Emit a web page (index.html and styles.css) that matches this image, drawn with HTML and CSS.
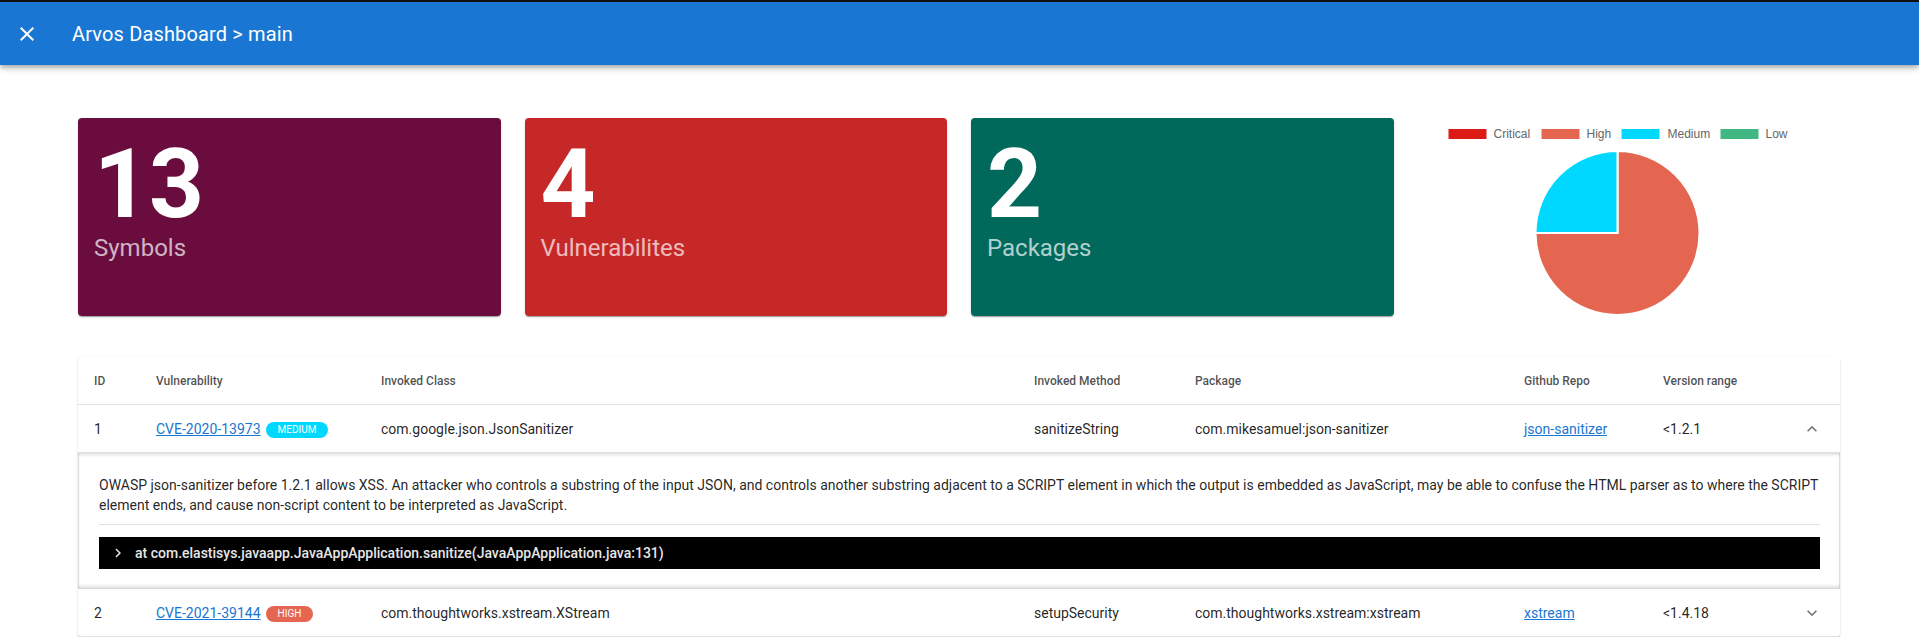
FILE: index.html
```html
<!DOCTYPE html>
<html lang="en">
<head>
<meta charset="utf-8">
<title>Arvos Dashboard</title>
<link rel="stylesheet" href="styles.css">
</head>
<body>
<header class="appbar">
  <span class="appbar-icon">
    <svg viewBox="0 0 24 24" width="24" height="24"><path d="M19 6.41 17.59 5 12 10.59 6.41 5 5 6.41 10.59 12 5 17.59 6.41 19 12 13.41 17.59 19 19 17.59 13.41 12z" fill="#fff"/></svg>
  </span>
  <h1 class="appbar-title">Arvos Dashboard &gt; main</h1>
</header>
<main class="content">
  <section class="stats">
    <div class="stat stat-symbols">
      <div class="stat-value">13</div>
      <div class="stat-label">Symbols</div>
    </div>
    <div class="stat stat-vulns">
      <div class="stat-value">4</div>
      <div class="stat-label">Vulnerabilites</div>
    </div>
    <div class="stat stat-packages">
      <div class="stat-value">2</div>
      <div class="stat-label">Packages</div>
    </div>
    <div class="chart">
      <svg class="chart-svg" viewBox="0 0 422 198" width="422" height="198">
        <rect x="30.5" y="11" width="38" height="10" fill="#DD1B16"/>
        <text x="75.5" y="19.5" class="legend-text">Critical</text>
        <rect x="123.5" y="11" width="38" height="10" fill="#E46651"/>
        <text x="168.5" y="19.5" class="legend-text">High</text>
        <rect x="203.5" y="11" width="38" height="10" fill="#00D8FF"/>
        <text x="249.5" y="19.5" class="legend-text">Medium</text>
        <rect x="302.5" y="11" width="38" height="10" fill="#41B883"/>
        <text x="347.5" y="19.5" class="legend-text">Low</text>
        <path d="M199.5 115 L199.5 33 A82 82 0 1 1 117.5 115 Z" fill="#E46651" stroke="#fff" stroke-width="2"/>
        <path d="M199.5 115 L117.5 115 A82 82 0 0 1 199.5 33 Z" fill="#00D8FF" stroke="#fff" stroke-width="2"/>
      </svg>
    </div>
  </section>

  <section class="table-card">
    <table class="vuln-table">
      <colgroup>
        <col class="c-id"><col class="c-vuln"><col class="c-class"><col class="c-method"><col class="c-pkg"><col class="c-repo"><col class="c-ver"><col class="c-toggle">
      </colgroup>
      <thead>
        <tr>
          <th>ID</th><th>Vulnerability</th><th>Invoked Class</th><th>Invoked Method</th><th>Package</th><th>Github Repo</th><th>Version range</th><th></th>
        </tr>
      </thead>
      <tbody>
        <tr class="row open">
          <td>1</td>
          <td><a class="link" href="#">CVE-2020-13973</a><span class="chip chip-medium">MEDIUM</span></td>
          <td>com.google.json.JsonSanitizer</td>
          <td>sanitizeString</td>
          <td>com.mikesamuel:json-sanitizer</td>
          <td><a class="link" href="#">json-sanitizer</a></td>
          <td>&lt;1.2.1</td>
          <td class="toggle"><svg viewBox="0 0 24 24" width="20" height="20"><path d="M12 8l-6 6 1.41 1.41L12 10.83l4.59 4.58L18 14z"/></svg></td>
        </tr>
        <tr class="detail-row">
          <td colspan="8" class="detail-cell">
            <div class="detail">
              <p class="detail-text">OWASP json-sanitizer before 1.2.1 allows XSS. An attacker who controls a substring of the input JSON, and controls another substring adjacent to a SCRIPT element in which the output is embedded as JavaScript, may be able to confuse the HTML parser as to where the SCRIPT element ends, and cause non-script content to be interpreted as JavaScript.</p>
              <hr class="divider">
              <div class="trace">
                <svg class="trace-icon" viewBox="0 0 24 24" width="18" height="18"><path d="M10 6 8.59 7.41 13.17 12l-4.58 4.59L10 18l6-6z"/></svg>
                <span class="trace-text">at com.elastisys.javaapp.JavaAppApplication.sanitize(JavaAppApplication.java:131)</span>
              </div>
            </div>
          </td>
        </tr>
        <tr class="row">
          <td>2</td>
          <td><a class="link" href="#">CVE-2021-39144</a><span class="chip chip-high">HIGH</span></td>
          <td>com.thoughtworks.xstream.XStream</td>
          <td>setupSecurity</td>
          <td>com.thoughtworks.xstream:xstream</td>
          <td><a class="link" href="#">xstream</a></td>
          <td>&lt;1.4.18</td>
          <td class="toggle"><svg viewBox="0 0 24 24" width="20" height="20"><path d="M16.59 8.59 12 13.17 7.41 8.59 6 10l6 6 6-6z"/></svg></td>
        </tr>
      </tbody>
    </table>
  </section>
</main>
</body>
</html>
```

FILE: styles.css
```css
html, body {
  margin: 0;
  padding: 0;
  overflow: hidden;
  background: #fff;
  font-family: Roboto, "Noto Sans", Arial, sans-serif;
  color: rgba(0, 0, 0, 0.87);
}

.appbar {
  display: flex;
  align-items: center;
  height: 63px;
  border-top: 2px solid #111;
  background: #1976d2;
  color: #fff;
  padding-left: 15px;
  box-shadow: 0 2px 4px -1px rgba(0,0,0,.2), 0 4px 5px 0 rgba(0,0,0,.14), 0 1px 10px 0 rgba(0,0,0,.12);
  position: relative;
  z-index: 2;
}

.appbar-icon {
  display: flex;
  width: 24px;
  height: 24px;
}

.appbar-title {
  margin: 0 0 0 33px;
  font-size: 20px;
  font-weight: 400;
  line-height: 1.6;
  letter-spacing: 0.15px;
}

.content {
  padding: 53px 79px 0 78px;
}

.stats {
  display: grid;
  grid-template-columns: repeat(4, 1fr);
  gap: 24px;
  height: 198px;
}

.stat {
  border-radius: 4px;
  color: #fff;
  padding: 22px 16px 0 16px;
  box-shadow: 0 2px 1px -1px rgba(0,0,0,.2), 0 1px 1px 0 rgba(0,0,0,.14), 0 1px 3px 0 rgba(0,0,0,.12);
}

.stat-symbols { background: #6a0c3e; }
.stat-vulns { background: #c62828; }
.stat-packages { background: #00695c; }

.stat-value {
  font-size: 96px;
  font-weight: 700;
  line-height: 88px;
}

.stat-label {
  margin-top: 6px;
  font-size: 24px;
  line-height: 28px;
  color: rgba(255, 255, 255, 0.7);
}

.chart {
  position: relative;
}

.chart-svg {
  display: block;
}

.legend-text {
  font-family: "Liberation Sans", Arial, sans-serif;
  font-size: 12px;
  fill: #666;
}

.table-card {
  margin-top: 41px;
  border-radius: 4px;
  background: #fff;
  overflow: hidden;
  box-shadow: 0 2px 1px -1px rgba(0,0,0,.2), 0 1px 1px 0 rgba(0,0,0,.14), 0 1px 3px 0 rgba(0,0,0,.12);
}

.vuln-table {
  width: 100%;
  border-collapse: collapse;
  table-layout: fixed;
}

.c-id { width: 62px; }
.c-vuln { width: 225px; }
.c-class { width: 653px; }
.c-method { width: 161px; }
.c-pkg { width: 329px; }
.c-repo { width: 139px; }
.c-ver { width: 137px; }
.c-toggle { width: 56px; }

.vuln-table th {
  height: 47px;
  padding: 0 16px;
  text-align: left;
  font-size: 12px;
  font-weight: 500;
  color: rgba(0, 0, 0, 0.7);
  border-bottom: 1px solid #e0e0e0;
  white-space: nowrap;
}

.row td {
  height: 47px;
  padding: 0 16px;
  font-size: 14px;
  line-height: 20px;
  border-bottom: 1px solid #e0e0e0;
  white-space: nowrap;
  vertical-align: middle;
}

.link {
  color: #1976d2;
  text-decoration: underline;
}

.chip {
  display: inline-block;
  vertical-align: 1px;
  margin-left: 5px;
  height: 16px;
  line-height: 16px;
  padding: 0 12px;
  border-radius: 8px;
  font-size: 10px;
  color: #fff;
}

.chip-medium { background: #00d8ff; }
.chip-high { background: #e46651; }

.row td.toggle {
  padding: 0;
  text-align: center;
}

.toggle svg {
  display: inline-block;
  vertical-align: middle;
  fill: rgba(0, 0, 0, 0.54);
}

.detail-cell {
  padding: 0;
}

.detail {
  padding: 22px 20px 19px 21px;
  box-shadow: inset 0 3px 4px -2px rgba(0,0,0,.18), inset 0 -3px 4px -2px rgba(0,0,0,.18), inset 1px 0 0 rgba(0,0,0,.08), inset -1px 0 0 rgba(0,0,0,.08);
  border-bottom: 1px solid #d8d8d8;
}

.detail-text {
  margin: 0;
  font-size: 14px;
  line-height: 20px;
}

.divider {
  margin: 9px 0 0 0;
  border: 0;
  height: 1px;
  background: #e0e0e0;
}

.trace {
  display: flex;
  align-items: center;
  height: 32px;
  margin-top: 12px;
  padding-left: 10px;
  background: #000;
  color: #e6e6e6;
}

.trace-icon {
  fill: #e6e6e6;
  flex: none;
}

.trace-text {
  margin-left: 8px;
  font-size: 14px;
  font-weight: 500;
}
```
